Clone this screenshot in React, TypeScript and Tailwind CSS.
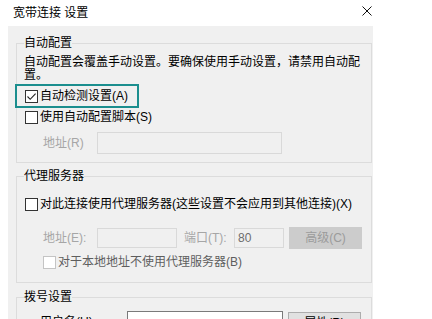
import React from "react";

function Box({ checked = false, disabled = false }: { checked?: boolean; disabled?: boolean }) {
  return (
    <div
      className={
        "w-[13px] h-[13px] shrink-0 border bg-white flex items-center justify-center " +
        (disabled ? "border-[#c4c4c4]" : "border-[#333333]")
      }
    >
      {checked && (
        <svg width="11" height="11" viewBox="0 0 11 11" fill="none">
          <polyline points="1.5,5.5 4.2,8.3 9.6,2.6" stroke="#222" strokeWidth="1.1" />
        </svg>
      )}
    </div>
  );
}

export default function App() {
  return (
    <div className="w-[432px] h-[319px] overflow-hidden bg-white flex flex-col font-['Liberation_Sans','Noto_Sans_CJK_SC',sans-serif] text-[12px] text-black">
      <div className="h-[26px] w-[373px] shrink-0 flex items-center justify-between pl-[13px] pr-[1px]">
        <span className="text-[12px] leading-[16px]">宽带连接 设置</span>
        <svg width="10" height="10" viewBox="0 0 10 10" className="-mt-[5px]">
          <line x1="0.5" y1="0.5" x2="9.5" y2="9.5" stroke="#111" strokeWidth="1" />
          <line x1="9.5" y1="0.5" x2="0.5" y2="9.5" stroke="#111" strokeWidth="1" />
        </svg>
      </div>
      <div className="ml-[8px] w-[365px] flex-1 bg-[#f0f0f0] pl-[8px] pr-[1px] pt-[9px] flex flex-col">
        {/* 自动配置 */}
        <fieldset className="m-0 min-w-0 border border-[#dcdcdc] px-[7px] pb-[8px]">
          <legend className="text-[12px] leading-[16px] p-0">自动配置</legend>
          <div className="mt-[5px] text-[12px] leading-[13px] whitespace-nowrap">
            自动配置会覆盖手动设置。要确保使用手动设置，请禁用自动配
            <br />
            置。
          </div>
          <div className="mt-[2px] -ml-[9px] w-[124px] h-[24px] border-2 border-[#1b8e8e] flex items-center pl-[8px]">
            <Box checked />
            <span className="ml-[2px] leading-[16px]">自动检测设置(A)</span>
          </div>
          <div className="h-[18px] flex items-center pl-[1px]">
            <Box />
            <span className="ml-[2px] leading-[16px]">使用自动配置脚本(S)</span>
          </div>
          <div className="mt-[6px] h-[22px] flex items-center pl-[19px]">
            <span className="w-[54px] text-[#a6a6a6] leading-[16px]">地址(R)</span>
            <div className="w-[185px] h-[22px] border border-[#d9d9d9] bg-[#f0f0f0]" />
          </div>
        </fieldset>

        {/* 代理服务器 */}
        <fieldset className="mt-[5px] m-0 min-w-0 border border-[#dcdcdc] px-[7px] pb-[11px]">
          <legend className="text-[12px] leading-[16px] p-0">代理服务器</legend>
          <div className="mt-[11px] h-[18px] flex items-center pl-[1px]">
            <Box />
            <span className="ml-[2px] leading-[16px] whitespace-nowrap">
              对此连接使用代理服务器(这些设置不会应用到其他连接)(X)
            </span>
          </div>
          <div className="mt-[14px] h-[22px] flex items-center pl-[19px]">
            <span className="w-[54px] text-[#a6a6a6] leading-[16px]">地址(E):</span>
            <div className="w-[80px] h-[20px] border border-[#d9d9d9] bg-[#f0f0f0]" />
            <span className="ml-[7px] w-[50px] text-[#a6a6a6] leading-[16px]">端口(T):</span>
            <div className="w-[50px] h-[20px] border border-[#d9d9d9] bg-[#f0f0f0] flex items-center pl-[3px] text-[#6d6d6d] leading-[16px]">
              80
            </div>
            <div className="ml-[5px] w-[73px] h-[22px] bg-[#cccccc] flex items-center justify-center text-[#9b9b9b] leading-[16px]">
              高级(C)
            </div>
          </div>
          <div className="mt-[4px] h-[18px] flex items-center pl-[19px]">
            <Box disabled />
            <span className="ml-[2px] leading-[16px] text-[#5e5e5e]">对于本地地址不使用代理服务器(B)</span>
          </div>
        </fieldset>

        {/* 拨号设置 */}
        <fieldset className="mt-[6px] m-0 min-w-0 border border-[#dcdcdc] px-[7px] pb-[8px]">
          <legend className="text-[12px] leading-[16px] p-0">拨号设置</legend>
          <div className="mt-[6px] h-[22px] flex items-start pl-[16px]">
            <span className="w-[87px] mt-[3px] leading-[16px]">用户名(U):</span>
            <div className="w-[156px] h-[22px] border border-[#7a7a7a] bg-white" />
            <div className="ml-[5px] mt-[1px] w-[73px] h-[22px] bg-[#e1e1e1] border border-[#adadad] flex items-center justify-center leading-[16px]">
              属性(R)
            </div>
          </div>
        </fieldset>
      </div>
    </div>
  );
}
